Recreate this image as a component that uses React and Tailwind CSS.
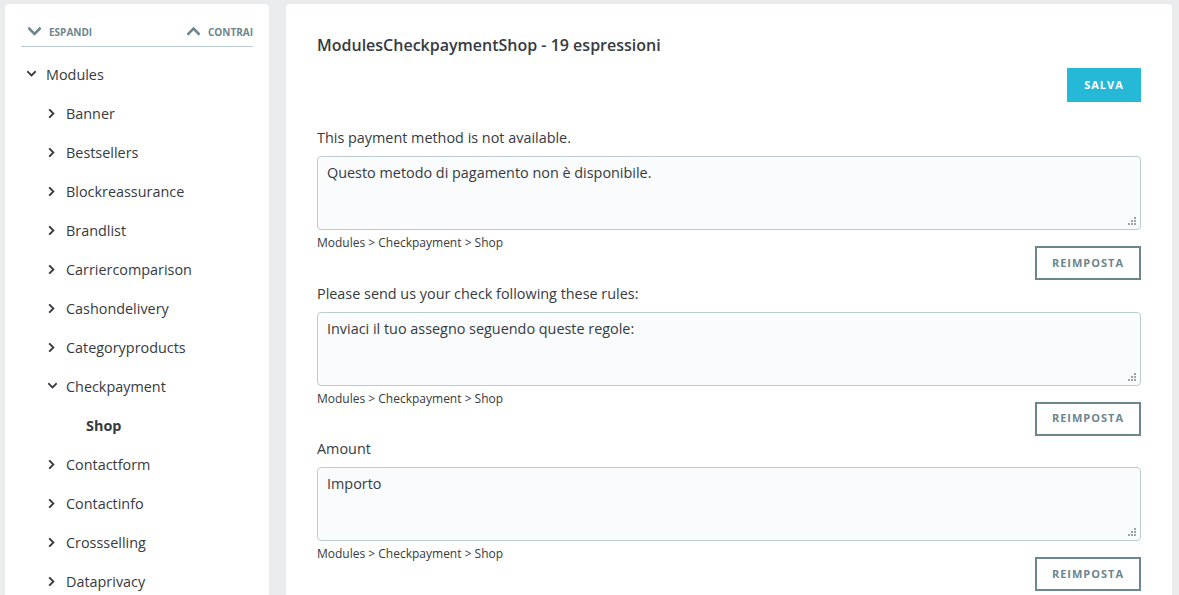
const Chevron = ({ dir = "right", className = "" }) => {
  const pts = {
    right: "2,1 6,5 2,9",
    down: "1,2 5,6 9,2",
    up: "1,6 5,2 9,6",
  };
  return (
    <svg viewBox="0 0 10 10" className={className} fill="none" stroke="currentColor" strokeWidth="2" strokeLinecap="square">
      <polyline points={pts[dir]} />
    </svg>
  );
};

const Grip = () => (
  <svg width="9" height="9" viewBox="0 0 9 9" className="absolute right-[3px] bottom-[3px]" fill="#9aa3a8">
    <rect x="6" y="0" width="2" height="2" />
    <rect x="3" y="3" width="2" height="2" />
    <rect x="6" y="3" width="2" height="2" />
    <rect x="0" y="6" width="2" height="2" />
    <rect x="3" y="6" width="2" height="2" />
    <rect x="6" y="6" width="2" height="2" />
  </svg>
);

const modules = [
  "Banner",
  "Bestsellers",
  "Blockreassurance",
  "Brandlist",
  "Carriercomparison",
  "Cashondelivery",
  "Categoryproducts",
  "Checkpayment",
  "Contactform",
  "Contactinfo",
  "Crossselling",
  "Dataprivacy",
  "Emailsubscription",
];

const entries = [
  { source: "This payment method is not available.", value: "Questo metodo di pagamento non è disponibile." },
  { source: "Please send us your check following these rules:", value: "Inviaci il tuo assegno seguendo queste regole:" },
  { source: "Amount", value: "Importo" },
  { source: "Payee", value: "Beneficiario" },
];

const Entry = ({ source, value }) => (
  <div className="mb-[3.5px]">
    <label className="block text-[14.4px] leading-5 text-[#363a41] mb-2">{source}</label>
    <div className="relative h-[74px] rounded-[4px] border border-[#bbcdd2] bg-[#fafbfc] px-[9px] pt-[6px] text-[14.4px] leading-5 text-[#363a41]">
      {value}
      <Grip />
    </div>
    <div className="flex justify-between items-start h-[50px]">
      <div className="pt-1 text-xs leading-[18px] text-[#363a41]">Modules &gt; Checkpayment &gt; Shop</div>
      <button className="mt-4 h-[34px] w-[106px] border-2 border-[#6c868e] bg-white text-[11px] font-bold tracking-[1px] text-[#6c868e] uppercase">
        Reimposta
      </button>
    </div>
  </div>
);

export default function App() {
  return (
    <div className="h-[595px] overflow-hidden bg-[#eaebec] flex items-start gap-[17px] pl-[5px] pr-[7px] pt-[4px]" style={{ fontFamily: '"Open Sans", sans-serif' }}>
      <aside className="w-[264px] shrink-0 bg-white rounded-[4px] px-4 pt-5 pb-6">
        <div className="flex justify-between items-center h-4 border-b border-[#bbcdd2] box-content pb-[6px] text-[10px] font-bold text-[#6c868e] uppercase">
          <div className="flex items-center">
            <Chevron dir="down" className="w-[13px] h-[13px] ml-[7px] mr-[8px]" />
            <span>Espandi</span>
          </div>
          <div className="flex items-center">
            <Chevron dir="up" className="w-[13px] h-[13px] mr-[8px]" />
            <span>Contrai</span>
          </div>
        </div>
        <ul className="mt-[8px] text-[14.4px] text-[#363a41]">
          <li className="h-[39px] flex items-center">
            <Chevron dir="down" className="w-[9px] h-[9px] ml-[6px] mr-[10px]" />
            <span>Modules</span>
          </li>
          {modules.map((m) => (
            <li key={m}>
              <div className="h-[39px] flex items-center pl-[27px]">
                <Chevron dir={m === "Checkpayment" ? "down" : "right"} className="w-[9px] h-[9px] mr-[9px]" />
                <span>{m}</span>
              </div>
              {m === "Checkpayment" && (
                <div className="h-[39px] flex items-center pl-[65px] font-bold">Shop</div>
              )}
            </li>
          ))}
        </ul>
      </aside>

      <main className="flex-1 bg-white rounded-[4px] px-[31px] pt-[30px] pb-8">
        <h2 className="text-base leading-[22px] font-semibold text-[#363a41]">ModulesCheckpaymentShop - 19 espressioni</h2>
        <div className="flex justify-end mt-3 mb-[26px]">
          <button className="h-[34px] w-[74px] bg-[#25b9d7] text-white text-[11px] font-bold tracking-[1px] uppercase">Salva</button>
        </div>
        {entries.map((e) => (
          <Entry key={e.source} {...e} />
        ))}
      </main>
    </div>
  );
}
